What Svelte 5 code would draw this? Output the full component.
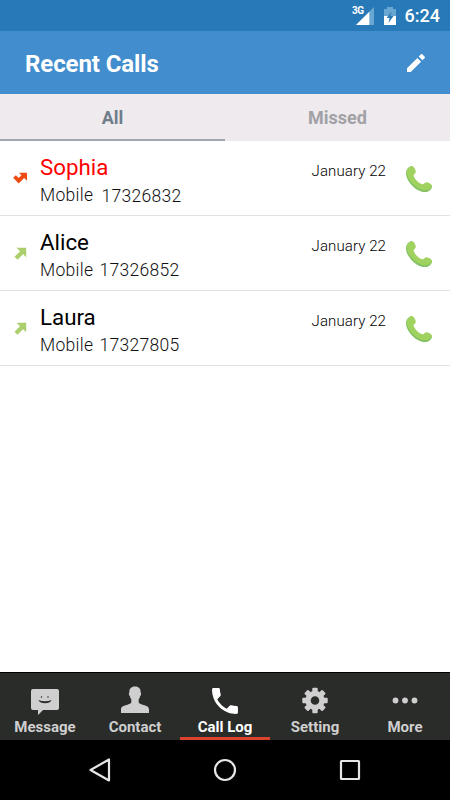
<script>
    const calls = [
        { name: 'Sophia', number: '17326832', date: 'January 22', missed: true },
        { name: 'Alice', number: '17326852', date: 'January 22', missed: false },
        { name: 'Laura', number: '17327805', date: 'January 22', missed: false }
    ];

    const filters = ['All', 'Missed'];
    const tabs = ['Message', 'Contact', 'Call Log', 'Setting', 'More'];

    let filter = $state('All');
    let activeTab = $state('Call Log');

    let visibleCalls = $derived(filter === 'All' ? calls : calls.filter((call) => call.missed));

    const teeth = [0, 45, 90, 135, 180, 225, 270, 315];
</script>

<div class="phone">
    <div class="status">
        <svg class="signal" width="24" height="22" viewBox="0 0 24 22">
            <path d="M23 3V21H5Z" fill="#69a6d2" />
            <path d="M18.300 7.700V21H5Z" fill="#fff" />
        </svg>
        <span class="network">3G</span>
        <svg class="battery" width="14" height="20" viewBox="0 0 14 20">
            <path d="M4 1h6v2h3v7H1V3h3z" fill="#69a6d2" />
            <path d="M1 10h12v9H1z" fill="#fff" />
            <path d="M8.500 5.500L3.600 12H6.600L5.500 17L10.500 10H7.400Z" fill="#2779b8" />
        </svg>
        <span class="clock">6:24</span>
    </div>

    <header>
        <h1>Recent Calls</h1>
        <button class="edit" aria-label="Edit">
            <svg width="24" height="24" viewBox="0 0 24 24">
                <path d="M3 17.250V21h3.750L17.100 10.650l-3.750-3.750L3 17.250zM20.710 7.040a1 1 0 0 0 0-1.410l-2.340-2.340a1 1 0 0 0-1.410 0l-2.300 2.300 3.750 3.750 2.300-2.300z" fill="#fff" />
            </svg>
        </button>
    </header>

    <div class="filters">
        {#each filters as item}
            <button class:selected={filter === item} onclick={() => (filter = item)}>{item}</button>
        {/each}
    </div>

    <main>
        {#each visibleCalls as call}
            <div class="row" class:missed={call.missed}>
                <div class="direction">
                    {#if call.missed}
                        <svg width="16" height="14" viewBox="0 0 16 14">
                            <path d="M1.500 4.500L5.700 8.700L11 3.400" fill="none" stroke="#ee4a12" stroke-width="3.800" />
                            <path d="M6 .8H14V8.800Z" fill="#ee4a12" />
                        </svg>
                    {:else}
                        <svg width="16" height="14" viewBox="0 0 16 14">
                            <path d="M3 11.300L10 4.300" fill="none" stroke="#abcf6c" stroke-width="4.200" />
                            <path d="M3.500 .7H13.200V10.200Z" fill="#abcf6c" />
                        </svg>
                    {/if}
                </div>
                <div class="who">
                    <div class="name">{call.name}</div>
                    <div class="detail">
                        <span>Mobile</span>
                        <span class="number">{call.number}</span>
                    </div>
                </div>
                <div class="date">{call.date}</div>
                <button class="dial" aria-label="Call {call.name}">
                    <svg width="28" height="28" viewBox="0 0 28 28">
                        <path d="M5.400 1.600C7.200.7 8.200 2 9.300 4.500c.9 2.100.9 3.400-.4 4.300-1.100.8-1.200 1.600-.6 3.100 1.100 3 4.700 6.800 8 8 1.600.6 2.400.3 3.200-.9.8-1.300 2-1.400 4-.5 2.900 1.300 4.200 2.300 3.300 4.200C25 26.500 21 28 16.200 26.600 8.700 24.300.7 14.800 1 8.300 1.100 4.800 2.800 2.800 5.400 1.600z" fill="#83c163" />
                        <path d="M5.800 1.300C7.900.8 9.200 2 10.200 4.500c.9 2.300.7 3.500-.6 4.400-1.200.8-1.200 1.500-.6 2.900 1.200 2.900 4.400 6.200 7.500 7.300 1.500.5 2.200.2 3-.9.900-1.300 2.200-1.400 4.100-.4 2.700 1.300 3.800 2.500 3 4.200-1.400 2.700-5.200 4-9.700 2.700C9.600 22.700 1.700 13.800 1.900 7.500 2 4.500 3.500 2.200 5.800 1.300z" fill="#a0d25f" />
                    </svg>
                </button>
            </div>
        {/each}
    </main>

    <nav class="tabs">
        {#each tabs as tab}
            <button class:active={activeTab === tab} onclick={() => (activeTab = tab)}>
                <svg width="36" height="32" viewBox="0 0 36 32">
                    {#if tab === 'Message'}
                        <path d="M6 5H30Q32 5 32 7V24Q32 26 30 26H16L11 31V26H6Q4 26 4 24V7Q4 5 6 5Z" fill="currentColor" />
                        <circle cx="14.500" cy="13" r=".8" fill="#2a2c2a" />
                        <circle cx="21" cy="13" r=".8" fill="#2a2c2a" />
                        <path d="M11.300 16Q18 18.700 24.700 16Q23 19.200 18 19.200Q13 19.200 11.300 16Z" fill="#2a2c2a" />
                    {:else if tab === 'Contact'}
                        <path d="M18 2.500c4 0 5.900 2.500 5.600 6 .9.500.6 2.900-.4 3.600-.2 1.300-.7 2.300-1.500 3.100v3.200c.8 1.500 3 1.800 5.800 2.800 3.300 1.100 4.500 2 4.500 4.800v3H4v-3c0-2.800 1.200-3.700 4.500-4.800 2.800-1 5-1.300 5.800-2.800v-3.200c-.8-.8-1.300-1.800-1.500-3.100-1-.7-1.300-3.100-.4-3.600-.3-3.500 1.600-6 5.600-6z" fill="currentColor" />
                    {:else if tab === 'Call Log'}
                        <path transform="translate(.7 -.3) scale(1.440)" d="M6.620 10.790a15.150 15.150 0 0 0 6.590 6.590l2.200-2.200c.27-.27.67-.36 1.020-.24 1.120.37 2.330.57 3.570.57.550 0 1 .45 1 1V20c0 .55-.45 1-1 1C10.610 21 3 13.390 3 4c0-.55.45-1 1-1h3.500c.55 0 1 .45 1 1 0 1.250.2 2.450.57 3.570.11.350.03.740-.25 1.020l-2.200 2.200z" fill="currentColor" />
                    {:else if tab === 'Setting'}
                        <g transform="translate(18 16.500)">
                            <circle r="7" fill="none" stroke="currentColor" stroke-width="5.400" />
                            {#each teeth as angle}
                                <rect x="-2.700" y="-12.700" width="5.400" height="5" rx="1" transform="rotate({angle})" fill="currentColor" />
                            {/each}
                        </g>
                    {:else}
                        <circle cx="8.500" cy="16.500" r="2.900" fill="currentColor" />
                        <circle cx="18" cy="16.500" r="2.900" fill="currentColor" />
                        <circle cx="27.500" cy="16.500" r="2.900" fill="currentColor" />
                    {/if}
                </svg>
                <span>{tab}</span>
            </button>
        {/each}
    </nav>

    <div class="system">
        <svg width="24" height="24" viewBox="0 0 24 24">
            <path d="M21 1.500V22.500L2.500 12Z" />
        </svg>
        <svg width="24" height="24" viewBox="0 0 24 24">
            <circle cx="12" cy="12" r="10" />
        </svg>
        <svg width="24" height="24" viewBox="0 0 24 24">
            <rect x="3" y="3" width="18" height="18" rx=".5" />
        </svg>
    </div>
</div>

<style>
    :global(body) {
        background: #fff;
    }

    .phone {
        display: flex;
        flex-direction: column;
        width: 450px;
        height: 800px;
        overflow: hidden;
        background: #fff;
        font-family: Roboto, 'Liberation Sans', sans-serif;
    }

    button {
        padding: 0;
        border: 0;
        background: none;
        font-family: inherit;
    }

    svg {
        display: block;
        flex-shrink: 0;
    }

    .status {
        position: relative;
        display: flex;
        justify-content: flex-end;
        align-items: center;
        height: 31px;
        flex-shrink: 0;
        box-sizing: border-box;
        padding: 1px 10px 0 0;
        background: #2779b8;
        color: #fff;
    }

    .signal {
        margin-top: -3px;
        margin-right: 8px;
    }

    .network {
        position: absolute;
        left: 352px;
        top: 5px;
        font-size: 10px;
        line-height: 12px;
        font-weight: 700;
        letter-spacing: -0.5px;
    }

    .battery {
        margin-right: 8px;
    }

    .clock {
        font-size: 18px;
        font-weight: 500;
        line-height: 22px;
    }

    header {
        display: flex;
        justify-content: space-between;
        align-items: center;
        height: 63px;
        flex-shrink: 0;
        box-sizing: border-box;
        padding: 0 22px 0 25px;
        background: #418dce;
    }

    h1 {
        margin: 2px 0 0;
        color: #fff;
        font-size: 24px;
        font-weight: 700;
        line-height: 30px;
        letter-spacing: -0.1px;
    }

    .edit {
        margin-top: 1px;
    }

    .filters {
        display: flex;
        height: 47px;
        flex-shrink: 0;
        background: #eeeaed;
    }

    .filters button {
        flex: 1;
        padding-top: 2px;
        border-bottom: 2px solid transparent;
        color: #a1a1a6;
        font-size: 18px;
        font-weight: 700;
    }

    .filters .selected {
        border-bottom-color: #a2a6b0;
        color: #6f7d8c;
    }

    main {
        flex: 1;
    }

    .row {
        display: flex;
        height: 75px;
        box-sizing: border-box;
        padding: 0 17px 0 12px;
        border-bottom: 1px solid #e2e2e2;
    }

    .direction {
        width: 28px;
        padding: 31px 0 0 1px;
        box-sizing: border-box;
    }

    .who {
        flex: 1;
        padding-top: 12px;
    }

    .name {
        color: #000;
        font-size: 22.300px;
        line-height: 28px;
    }

    .missed .name {
        color: #f00;
    }

    .detail {
        display: flex;
        gap: 6px;
        padding-top: 2px;
        color: #111;
        font-size: 17.500px;
        font-weight: 300;
        line-height: 25px;
        letter-spacing: 0.3px;
    }

    .missed .number {
        padding: 1px 0 0 2px;
    }

    .date {
        margin-right: 19px;
        padding-top: 20px;
        color: #000;
        font-size: 15px;
        font-weight: 300;
        line-height: 21px;
        letter-spacing: 0.1px;
    }

    .dial {
        align-self: flex-start;
        margin-top: 24px;
    }

    .tabs {
        display: flex;
        height: 68px;
        flex-shrink: 0;
        box-sizing: border-box;
        border-top: 1px solid #000;
        background: #2a2c2a;
    }

    .tabs button {
        display: flex;
        flex: 1;
        flex-direction: column;
        align-items: center;
        padding-top: 11px;
        border-bottom: 3px solid transparent;
        color: #cfcfcf;
        font-size: 15px;
        font-weight: 700;
        line-height: 22px;
    }

    .tabs .active {
        border-bottom-color: #d9432f;
        color: #fff;
    }

    .system {
        display: flex;
        justify-content: space-between;
        align-items: center;
        height: 60px;
        flex-shrink: 0;
        box-sizing: border-box;
        padding: 0 88px;
        background: #000;
    }

    .system svg {
        fill: none;
        stroke: #e6e6e6;
        stroke-width: 2.200;
        stroke-linejoin: round;
    }
</style>
